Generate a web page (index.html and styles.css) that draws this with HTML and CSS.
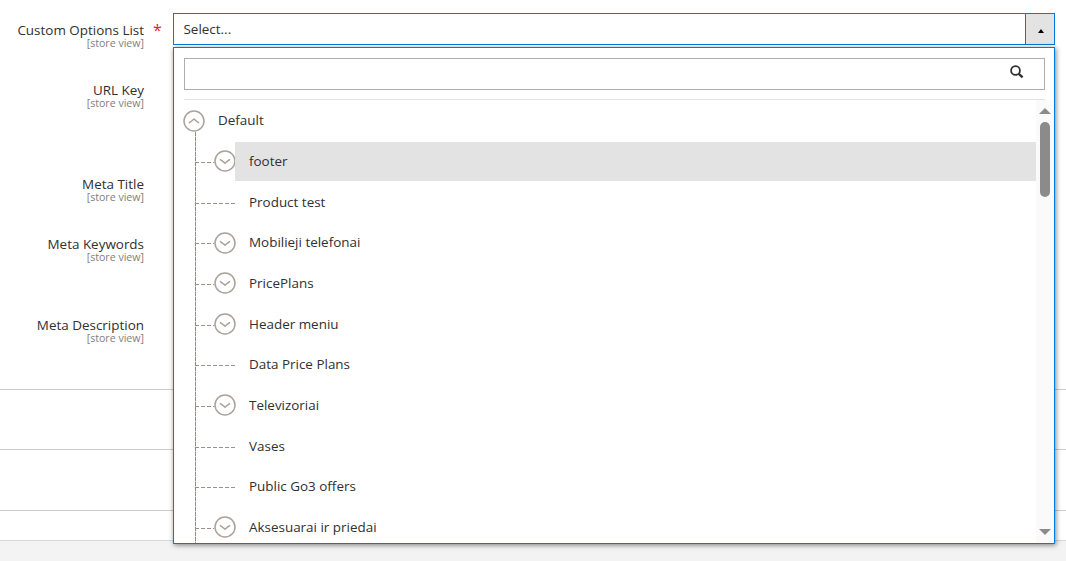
FILE: index.html
```
<!DOCTYPE html>
<html lang="en">
<head>
<meta charset="utf-8">
<title>Category</title>
<link rel="stylesheet" href="styles.css">
</head>
<body>
<svg class="defs" aria-hidden="true">
  <symbol id="down" viewBox="0 0 22 22"><circle cx="11" cy="11" r="10"/><path d="M5.8 9.5Q6.8 9.6 11 13.3Q15.2 9.6 16.2 9.5"/></symbol>
  <symbol id="up" viewBox="0 0 22 22"><circle cx="11" cy="11" r="10"/><path d="M5.8 12.8Q6.8 12.7 11 9Q15.2 12.7 16.2 12.8"/></symbol>
</svg>
<main class="page">
  <form class="form">
    <div class="field">
      <label class="label">Custom Options List<small class="scope">[store view]</small></label>
      <span class="required">*</span>
      <div class="select">
        <div class="select-box"><span class="select-value">Select...</span><span class="select-toggle"><svg class="caret" viewBox="0 0 6 4"><path d="M3 0L6 4H0Z"/></svg></span></div>
        <div class="menu">
          <div class="search"><svg class="glass" viewBox="0 0 14 14"><circle cx="5.5" cy="5.5" r="4.4"/><path d="M8.8 8.8L12.6 12.4"/></svg></div>
          <div class="rule"></div>
          <div class="tree">
            <div class="tree-body">
              <div class="root"><svg class="knob"><use href="#up"/></svg><span>Default</span></div>
              <ul class="branch">
                <li class="node active"><span class="stem"></span><svg class="knob"><use href="#down"/></svg><span class="name">footer</span></li>
                <li class="node leaf"><span class="stem"></span><span class="name">Product test</span></li>
                <li class="node"><span class="stem"></span><svg class="knob"><use href="#down"/></svg><span class="name">Mobilieji telefonai</span></li>
                <li class="node"><span class="stem"></span><svg class="knob"><use href="#down"/></svg><span class="name">PricePlans</span></li>
                <li class="node"><span class="stem"></span><svg class="knob"><use href="#down"/></svg><span class="name">Header meniu</span></li>
                <li class="node leaf"><span class="stem"></span><span class="name">Data Price Plans</span></li>
                <li class="node"><span class="stem"></span><svg class="knob"><use href="#down"/></svg><span class="name">Televizoriai</span></li>
                <li class="node leaf"><span class="stem"></span><span class="name">Vases</span></li>
                <li class="node leaf"><span class="stem"></span><span class="name">Public Go3 offers</span></li>
                <li class="node"><span class="stem"></span><svg class="knob"><use href="#down"/></svg><span class="name">Aksesuarai ir priedai</span></li>
              </ul>
            </div>
            <div class="scrollbar">
              <svg class="arrow" viewBox="0 0 12 6"><path d="M6 0L12 6H0Z"/></svg>
              <span class="thumb"></span>
              <svg class="arrow end" viewBox="0 0 12 6"><path d="M0 0H12L6 6Z"/></svg>
            </div>
          </div>
        </div>
      </div>
    </div>
    <div class="field tall"><label class="label">URL Key<small class="scope">[store view]</small></label></div>
    <div class="field"><label class="label">Meta Title<small class="scope">[store view]</small></label></div>
    <div class="field medium"><label class="label">Meta Keywords<small class="scope">[store view]</small></label></div>
    <div class="field"><label class="label">Meta Description<small class="scope">[store view]</small></label></div>
  </form>
  <section class="section"></section>
  <section class="section wide"></section>
  <section class="section short"></section>
  <footer class="footer"></footer>
</main>
</body>
</html>
```
FILE: styles.css
```
* { box-sizing: border-box; }
body { margin: 0; font: 14px/20px "Open Sans", "Noto Sans", sans-serif; color: #303030; overflow: hidden; }
.defs { position: absolute; width: 0; height: 0; }
.page { display: flex; flex-direction: column; height: 561px; background: #fff; }
.form { height: 389px; padding-top: 13px; }
.field { display: flex; height: 60px; }
.tall { height: 94px; }
.medium { height: 81px; }
.label { width: 144px; padding-top: 9px; text-align: right; font-size: 13.45px; line-height: 16px; white-space: nowrap; }
.scope { display: block; font-size: 10.6px; line-height: 11px; color: #808080; }
.required { width: 29px; padding: 7px 0 0 9px; font-size: 16px; color: #e22626; }
.select { position: relative; width: 882px; color: #303030; font-size: 13.45px; }
.select-box { display: flex; height: 32px; border: 1px solid #007bdb; background: #fff; }
.select-value { flex: 1; padding: 5px 9.5px; }
.select-toggle { display: flex; align-items: center; justify-content: center; width: 29px; border-left: 1px solid #007bdb; background: #e3e3e3; }
.caret { width: 6px; height: 4px; margin: 4px 0 0 2px; fill: #000; }
.menu { position: absolute; z-index: 2; top: 34px; left: 0; width: 882px; height: 497px; padding: 10px 0 0 9px; border: 1px solid #007bdb; background: #fff; box-shadow: 1px 1px 5px rgba(0,0,0,.5); overflow: hidden; }
.search { display: flex; justify-content: flex-end; width: 861px; height: 32px; margin-left: 1px; padding: 6px 20px 0 0; border: 1px solid #adadad; }
.glass { width: 14px; height: 14px; fill: none; stroke: #303030; stroke-width: 1.8; }
.glass path { stroke-width: 2.3; }
.rule { width: 861px; height: 1px; margin: 9px 0 0 1px; background: #e3e3e3; }
.tree { display: flex; width: 871px; height: 443px; }
.tree-body { flex: 1; overflow: hidden; }
.root { display: flex; align-items: center; gap: 13px; height: 41px; }
.root span { padding-bottom: 2px; }
.knob { flex: none; width: 22px; height: 22px; fill: #fff; stroke: #aba29a; stroke-width: 1.5; }
.knob path { fill: none; stroke-width: 1.4; }
.branch { margin: -9px 0 0 12px; padding: 9px 0 0; list-style: none; background: repeating-linear-gradient(#958b84 0 4px, #d5d1ce 4px 5px) 0 0 / 1px 100% no-repeat; }
.node { display: flex; align-items: center; height: 40.68px; }
.node .knob { margin-right: -1px; }
.stem { flex: none; width: 19px; height: 1px; margin-top: 2px; background: repeating-linear-gradient(90deg, #9c928a 0 4px, transparent 4px 6px); }
.leaf .stem { width: 40px; }
.name { flex: 1; height: 39px; padding: 9px 14px; }
.active .name { background: #e3e3e3; }
.scrollbar { display: flex; flex-direction: column; align-items: center; width: 18px; padding: 8px 0; background: #fafafa; }
.arrow { width: 12px; height: 6px; fill: #8b8b8b; }
.thumb { width: 10px; height: 75px; margin-top: 8px; border-radius: 5px; background: #8b8b8b; }
.end { margin-top: auto; }
.section { height: 60px; border-top: 1px solid #ccc; }
.wide { height: 61px; }
.short { height: 30px; }
.footer { flex: 1; border-top: 1px solid #d8d8d8; background: #f3f3f3; }
```
